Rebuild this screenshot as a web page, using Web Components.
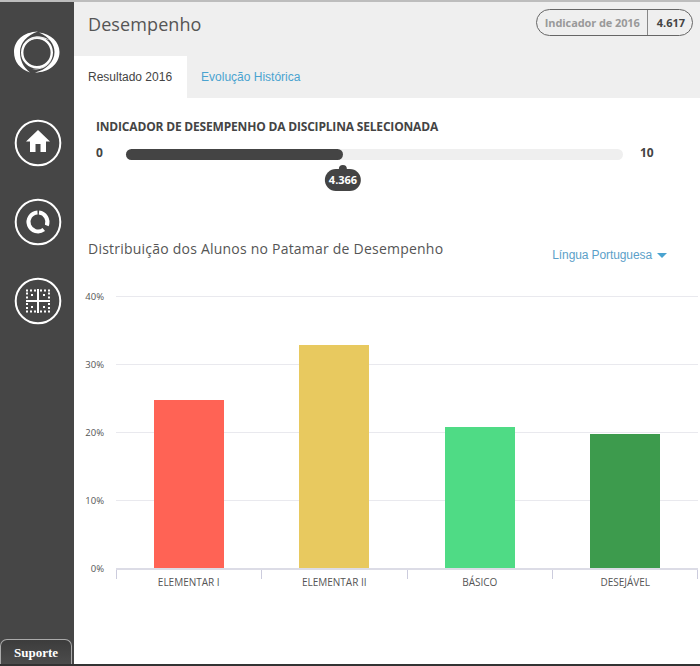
<!DOCTYPE html>
<html lang="pt">
<head>
<meta charset="utf-8">
<title>Desempenho</title>
<style>
  html, body { margin: 0; height: 666px; overflow: hidden; background: #fff; }
</style>
</head>
<body>
<app-shell>
  <side-nav slot="nav"></side-nav>
  <page-header slot="header" title-text="Desempenho" label="Indicador de 2016" value="4.617"></page-header>
  <tab-bar slot="header"></tab-bar>
  <score-bar min="0" max="10" value="4.366"></score-bar>
  <dist-chart></dist-chart>
</app-shell>

<script>
class AppShell extends HTMLElement {
  constructor() {
    super();
    this.attachShadow({ mode: 'open' }).innerHTML = `
      <style>
        :host { display: flex; height: 666px; box-sizing: border-box; font-family: 'Open Sans', sans-serif; color: #444; }
        .wrap { flex: 1; display: flex; flex-direction: column; border-top: 2px solid #bdbdbd; border-bottom: 2px solid #333; min-width: 0; }
        .body { flex: 1; display: flex; min-height: 0; }
        .main { flex: 1; display: flex; flex-direction: column; min-width: 0; }
        .head { background: #efefef; }
      </style>
      <div class="wrap">
        <div class="body">
          <slot name="nav"></slot>
          <div class="main">
            <div class="head"><slot name="header"></slot></div>
            <slot></slot>
          </div>
        </div>
      </div>`;
  }
}

class SideNav extends HTMLElement {
  constructor() {
    super();
    this.attachShadow({ mode: 'open' }).innerHTML = `
      <style>
        :host { display: flex; flex-direction: column; align-items: center; width: 74px; background: #464646; flex: none; }
        .logo { width: 46px; height: 42px; margin-top: 29px; display: block; }
        .btn { width: 48px; height: 48px; display: block; margin-left: 1px; }
        .first { margin-top: 46px; }
        .next { margin-top: 31px; }
        .sup { margin-top: auto; align-self: flex-start; width: 72px; height: 25px; box-sizing: border-box; border: 1px solid #aaa; border-bottom: 0; border-radius: 7px 7px 0 0;
               background: linear-gradient(#3c3c3c, #4c4c4c); color: #fff; font: bold 13px 'Liberation Serif', serif; text-align: center; line-height: 26px; }
      </style>
      <svg class="logo" viewBox="0 0 46 42" fill="#fff">
        <path d="M24 .5C9 1 0 10 0 21c0 10 6 17 16 20.500C9 36 6 29 6 21 6 12 13 4 24 .5Z"/>
        <path d="M25 1.500C37 3 45.500 11 45.500 21 45.500 33 35 41.500 21 41.500 32 39 40.500 31 40.500 21 40.500 13 35 6 25 1.500Z"/>
        <circle cx="23" cy="21.500" r="14.800" fill="none" stroke="#fff" stroke-width="2.400"/>
        <path d="M11 12C17 4.500 28 3.500 36 9.500 27 5.500 18 7 11 12Z" fill="#eee"/>
        <path d="M38 29C33 37 25 39.500 18 38 26 38 33 35 38 29Z" fill="#eee"/>
      </svg>
      <svg class="btn first" viewBox="0 0 48 48">
        <circle cx="24" cy="24" r="22.300" fill="none" stroke="#fff" stroke-width="2"/>
        <path d="M24 11 36 22.500H32V33H26.500V25H21.500V33H16V22.500H12Z" fill="#fff"/>
      </svg>
      <svg class="btn next" viewBox="0 0 48 48">
        <circle cx="24" cy="24" r="22.300" fill="none" stroke="#fff" stroke-width="2"/>
        <path d="M23.500 14.500A9.500 9.500 0 1 0 29.800 31.500" fill="none" stroke="#fff" stroke-width="4"/>
        <path d="M25 14.600A9.500 9.500 0 0 1 32.800 27.500" fill="none" stroke="#fff" stroke-width="4"/>
      </svg>
      <svg class="btn next" viewBox="0 0 48 48">
        <circle cx="24" cy="24" r="22.300" fill="none" stroke="#fff" stroke-width="2"/>
        <path d="M24 12V36M12 24H36" stroke="#fff" stroke-width="2"/>
        <path d="M12 13.500H22M26 13.500H36M12 34.500H22M26 34.500H36M13 15.500V22M35 15.500V22M13 26V33M35 26V33M17 18H19M29 18H31M17 30H19M29 30H31" stroke="#fff" stroke-width="2" stroke-dasharray="2 2" fill="none"/>
      </svg>
      <div class="sup">Suporte</div>`;
  }
}

class PageHeader extends HTMLElement {
  constructor() {
    super();
    this.attachShadow({ mode: 'open' });
  }
  connectedCallback() {
    const title = this.getAttribute('title-text') || '';
    const label = this.getAttribute('label') || '';
    const value = this.getAttribute('value') || '';
    this.shadowRoot.innerHTML = `
      <style>
        :host { display: flex; justify-content: space-between; align-items: flex-start; height: 54px; padding: 0 7px 0 14px; }
        h1 { margin: 8px 0 0; font: 400 18px/28px 'Open Sans', sans-serif; color: #555; letter-spacing: .1px; }
        .pill { margin-top: 7px; display: flex; height: 27px; box-sizing: border-box; border: 1px solid #666; border-radius: 14px; font: bold 11px/25px 'Open Sans', sans-serif; }
        .l { padding: 0 7px 0 8px; color: #999; border-right: 1px solid #888; letter-spacing: -.1px; }
        .v { padding: 0 7px 0 9px; color: #444; }
      </style>
      <h1>${title}</h1>
      <div class="pill"><span class="l">${label}</span><span class="v">${value}</span></div>`;
  }
}

class TabBar extends HTMLElement {
  constructor() {
    super();
    this.attachShadow({ mode: 'open' }).innerHTML = `
      <style>
        :host { display: flex; height: 42px; font: 12px/42px 'Liberation Sans', Arial, sans-serif; }
        div { padding: 0 15px 0 14px; }
        .on { background: #fff; color: #444; }
        .off { color: #4aa3d0; }
      </style>
      <div class="on">Resultado 2016</div>
      <div class="off">Evolução Histórica</div>`;
  }
}

class ScoreBar extends HTMLElement {
  constructor() {
    super();
    this.attachShadow({ mode: 'open' });
  }
  connectedCallback() {
    const min = +this.getAttribute('min');
    const max = +this.getAttribute('max');
    const value = this.getAttribute('value');
    const pct = (parseFloat(value) - min) / (max - min) * 100;
    this.shadowRoot.innerHTML = `
      <style>
        :host { display: block; height: 127px; box-sizing: border-box; padding: 20px 0 0 22px; font-family: 'Open Sans', sans-serif; }
        h2 { margin: 0; font: 700 12px/17px 'Open Sans', sans-serif; color: #444; letter-spacing: -.18px; }
        .row { display: flex; align-items: center; margin-top: 11px; font: bold 12px/14px 'Open Sans', sans-serif; color: #444; }
        .n0 { width: 30px; margin-bottom: 2px; }
        .track { width: 497px; height: 11px; border-radius: 6px; background: #efefef; position: relative; }
        .fill { height: 100%; width: ${pct}%; border-radius: 6px; background: #444; }
        .tip { position: absolute; left: ${pct}%; top: 20px; transform: translateX(-50%); height: 22px; padding: 0 4px; border-radius: 11px; background: #444; color: #fff;
               font: bold 11px/22px 'Open Sans', sans-serif; white-space: nowrap; }
        .tip::before { content: ''; position: absolute; left: 50%; top: -4px; width: 8px; height: 8px; margin-left: -4px; border-radius: 50%; background: #444; }
        .n1 { margin: 0 0 2px 17px; }
      </style>
      <h2>INDICADOR DE DESEMPENHO DA DISCIPLINA SELECIONADA</h2>
      <div class="row">
        <span class="n0">${min}</span>
        <div class="track"><div class="fill"></div><div class="tip">${value}</div></div>
        <span class="n1">${max}</span>
      </div>`;
  }
}

class DistChart extends HTMLElement {
  constructor() {
    super();
    this.attachShadow({ mode: 'open' });
  }
  connectedCallback() {
    const data = [
      ['ELEMENTAR I', 24.7, '#ff6355'],
      ['ELEMENTAR II', 32.8, '#e8c95f'],
      ['BÁSICO', 20.8, '#4fdb85'],
      ['DESEJÁVEL', 19.7, '#3d9b4d'],
    ];
    const ticks = ['40%', '30%', '20%', '10%'];
    this.shadowRoot.innerHTML = `
      <style>
        :host { display: block; flex: 1; padding: 14px 0 0 14px; }
        .top { display: flex; justify-content: space-between; height: 57px; }
        h3 { margin: 0; font: 400 14px/20px 'Open Sans', sans-serif; color: #555; letter-spacing: .22px; }
        .pick { align-self: flex-start; font: 12px/20px 'Liberation Sans', Arial, sans-serif; color: #5b9fc9; letter-spacing: -.1px; margin: 6px 33px 0 0; display: flex; align-items: center; }
        .pick i { margin-left: 5px; border: 5px solid transparent; border-top-color: #4aa3d0; border-bottom: 0; }
        .plot { position: relative; margin-left: 28px; width: 582px; }
        .line { height: 68px; box-sizing: border-box; border-top: 1px solid #e9e9ee; position: relative; }
        .line span { position: absolute; right: 100%; margin-right: 12px; top: -7px; font: 9.500px/13px 'Open Sans', sans-serif; color: #555; }
        .bars { position: absolute; inset: 0 0 0 0; display: flex; }
        .slot { flex: 1; display: flex; justify-content: center; align-items: flex-end; }
        .bar { width: 70px; }
        .axis { position: relative; display: flex; height: 9px; border-top: 2px solid #dcdce6; }
        .axis span { position: absolute; right: 100%; margin-right: 12px; top: -8px; font: 9.500px/13px 'Open Sans', sans-serif; color: #555; }
        .cat { flex: 1; height: 9px; border-left: 1px solid #ccd; }
        .cat:last-child { border-right: 1px solid #ccd; }
        .labels { display: flex; margin-top: -3px; }
        .labels div { flex: 1; text-align: center; font: 10px/13px 'Open Sans', sans-serif; color: #555; }
      </style>
      <div class="top">
        <h3>Distribuição dos Alunos no Patamar de Desempenho</h3>
        <div class="pick">Língua Portuguesa<i></i></div>
      </div>
      <div class="plot">
        ${ticks.map(t => `<div class="line"><span>${t}</span></div>`).join('')}
        <div class="bars">
          ${data.map(d => `<div class="slot"><div class="bar" style="height:${d[1] * 6.8}px;background:${d[2]}"></div></div>`).join('')}
        </div>
      </div>
      <div class="plot">
        <div class="axis"><span>0%</span>${data.map(() => '<div class="cat"></div>').join('')}</div>
        <div class="labels">${data.map(d => `<div>${d[0]}</div>`).join('')}</div>
      </div>`;
  }
}

customElements.define('app-shell', AppShell);
customElements.define('side-nav', SideNav);
customElements.define('page-header', PageHeader);
customElements.define('tab-bar', TabBar);
customElements.define('score-bar', ScoreBar);
customElements.define('dist-chart', DistChart);
</script>
</body>
</html>
